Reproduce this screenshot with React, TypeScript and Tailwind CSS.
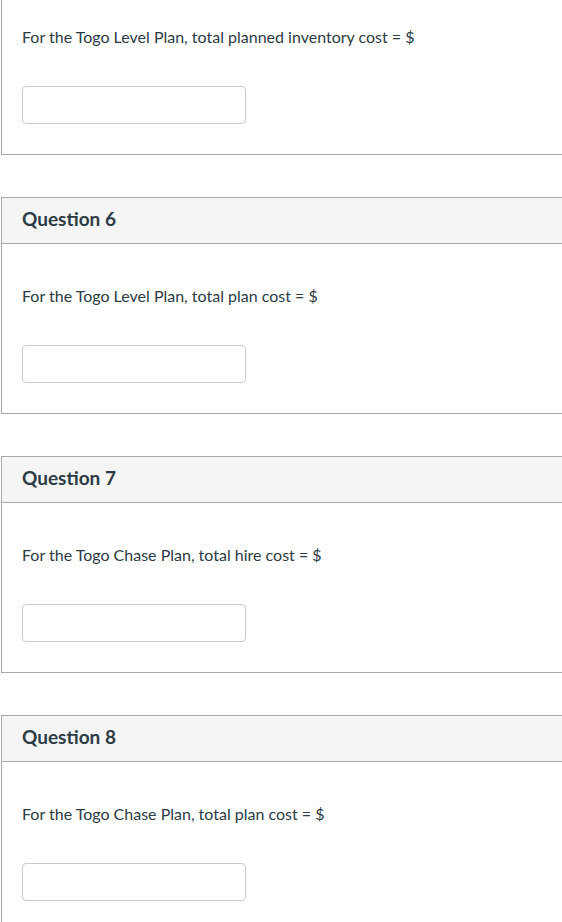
const questions = [
  { n: 6, text: 'For the Togo Level Plan, total plan cost = $' },
  { n: 7, text: 'For the Togo Chase Plan, total hire cost = $' },
  { n: 8, text: 'For the Togo Chase Plan, total plan cost = $' },
];

function Answer({ text, top }: { text: string; top: string }) {
  return (
    <div className={`px-[20px] pb-[30px] ${top}`}>
      <p className="text-[16px] leading-5 text-[#2d3b45]">{text}</p>
      <input
        type="text"
        className="mt-[39px] block h-[38px] w-[224px] rounded-[4px] border border-[#c7cdd1] bg-white px-2 outline-none"
      />
    </div>
  );
}

function QuestionCard({ n, text }: { n: number; text: string }) {
  return (
    <div className="w-[600px] border border-[#a9a9a9] bg-white">
      <div className="flex h-[46px] items-center border-b border-[#a9a9a9] bg-[#f5f5f5] px-[20px] pb-[4px]">
        <h2 className="text-[19px] font-bold leading-6 text-[#2d3b45]">Question {n}</h2>
      </div>
      <Answer text={text} top="pt-[42px]" />
    </div>
  );
}

export default function App() {
  return (
    <div
      className="min-h-[922px] w-full overflow-hidden bg-white pl-[1px]"
      style={{ fontFamily: 'Lato, "Open Sans", sans-serif' }}
    >
      <div className="flex flex-col gap-[42px]">
        {/* previous question, header scrolled off above */}
        <div className="w-[600px] border-x border-b border-[#a9a9a9] bg-white">
          <Answer text="For the Togo Level Plan, total planned inventory cost = $" top="pt-[27px]" />
        </div>
        {questions.map((q) => (
          <QuestionCard key={q.n} {...q} />
        ))}
      </div>
    </div>
  );
}
